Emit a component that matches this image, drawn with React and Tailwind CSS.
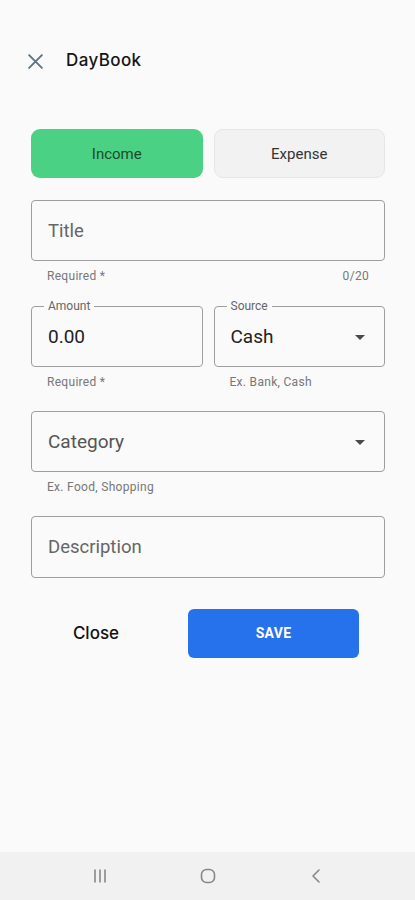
import { useState } from "react";

const font = { fontFamily: "Roboto, 'Liberation Sans', sans-serif" };

const Caret = () => (
  <svg width="10" height="5" viewBox="0 0 10 5" className="text-[#4a4a4a]">
    <path d="M0 0 L10 0 L5 5 Z" fill="currentColor" />
  </svg>
);

const Helper = ({ left, right }) => (
  <div className="mt-[7px] h-4 px-4 flex justify-between text-[12px] leading-4 text-[#777] tracking-[0.3px]">
    <span>{left}</span>
    {right && <span>{right}</span>}
  </div>
);

const App = () => {
  const [type, setType] = useState("income");

  return (
    <div className="h-[900px] w-full bg-[#fafafa] flex flex-col" style={font}>
      <div className="flex-1 pl-[31px] pr-[30px]">
        {/* header */}
        <div className="h-[26px] mt-[48px] flex items-center -ml-[4px]">
          <svg width="17" height="17" viewBox="0 0 16 16" className="text-[#5b7682]">
            <path d="M2 2 L14 14 M14 2 L2 14" stroke="currentColor" strokeWidth="1.8" strokeLinecap="round" />
          </svg>
          <span className="ml-[22px] text-[17px] font-medium text-[#151515] tracking-[0.4px]" style={{ fontFamily: "Inter, Roboto, sans-serif" }}>
            DayBook
          </span>
        </div>

        {/* toggle */}
        <div className="mt-[55px] grid grid-cols-2 gap-[11px]">
          <button
            onClick={() => setType("income")}
            className={
              type === "income"
                ? "h-[49px] pt-[2px] rounded-[9px] bg-[#4bd183] text-[#1c4a2c] text-[15px]"
                : "h-[49px] pt-[2px] rounded-[9px] bg-[#f2f2f2] border border-[#e6e6e6] text-[#333] text-[15px]"
            }
          >
            Income
          </button>
          <button
            onClick={() => setType("expense")}
            className={
              type === "expense"
                ? "h-[49px] pt-[2px] rounded-[9px] bg-[#4bd183] text-[#1c4a2c] text-[15px]"
                : "h-[49px] pt-[2px] rounded-[9px] bg-[#f2f2f2] border border-[#e6e6e6] text-[#333] text-[15px]"
            }
          >
            Expense
          </button>
        </div>

        {/* title */}
        <div className="mt-[22px]">
          <div className="h-[61px] pt-[2px] rounded-[4px] border border-[#9e9e9e] flex items-center px-4">
            <span className="text-[18.5px] text-[#666]">Title</span>
          </div>
          <Helper left="Required *" right="0/20" />
        </div>

        {/* amount + source */}
        <div className="mt-[22px] grid grid-cols-2 gap-[11px]">
          <div>
            <div className="relative h-[61px] pt-[2px] rounded-[4px] border border-[#9e9e9e] flex items-center px-4">
              <span className="absolute -top-[9px] left-[12px] px-[4px] bg-[#fafafa] text-[12px] leading-4 text-[#666]">
                Amount
              </span>
              <span className="text-[19px] text-[#222]">0.00</span>
            </div>
            <Helper left="Required *" />
          </div>
          <div>
            <div className="relative h-[61px] pt-[2px] rounded-[4px] border border-[#9e9e9e] flex items-center justify-between pl-4 pr-[19px]">
              <span className="absolute -top-[9px] left-[12px] px-[4px] bg-[#fafafa] text-[12px] leading-4 text-[#666]">
                Source
              </span>
              <span className="text-[19px] text-[#222]">Cash</span>
              <Caret />
            </div>
            <Helper left="Ex. Bank, Cash" />
          </div>
        </div>

        {/* category */}
        <div className="mt-[21px]">
          <div className="h-[61px] pt-[2px] rounded-[4px] border border-[#9e9e9e] flex items-center justify-between pl-4 pr-[19px]">
            <span className="text-[19px] text-[#555]">Category</span>
            <Caret />
          </div>
          <Helper left="Ex. Food, Shopping" />
        </div>

        {/* description */}
        <div className="mt-[21px] h-[62px] pt-[2px] rounded-[4px] border border-[#9e9e9e] flex items-center px-4">
          <span className="text-[18.5px] text-[#666]">Description</span>
        </div>

        {/* actions */}
        <div className="mt-[31px] flex items-center">
          <button className="w-[130px] h-[49px] text-[17px] font-medium text-[#111]" style={{ fontFamily: "Inter, Roboto, sans-serif" }}>
            Close
          </button>
          <button className="ml-[27px] w-[171px] h-[49px] rounded-[6px] bg-[#2672ec] text-white text-[14px] font-bold tracking-[0.3px]">
            SAVE
          </button>
        </div>
      </div>

      {/* system nav */}
      <div className="h-[48px] bg-[#f1f1f1] flex items-center justify-center gap-[92px]">
        <svg width="16" height="16" viewBox="0 0 16 16" className="text-[#888]">
          <path d="M3 1.5 V14.5 M8 1.5 V14.5 M13 1.5 V14.5" stroke="currentColor" strokeWidth="1.6" />
        </svg>
        <svg width="16" height="16" viewBox="0 0 16 16" className="text-[#888]">
          <rect x="1.5" y="1.5" width="13" height="13" rx="5" fill="none" stroke="currentColor" strokeWidth="1.6" />
        </svg>
        <svg width="16" height="16" viewBox="0 0 16 16" className="text-[#888]">
          <path d="M11 2 L5 8 L11 14" fill="none" stroke="currentColor" strokeWidth="1.6" strokeLinecap="round" strokeLinejoin="round" />
        </svg>
      </div>
    </div>
  );
};

export default App;
